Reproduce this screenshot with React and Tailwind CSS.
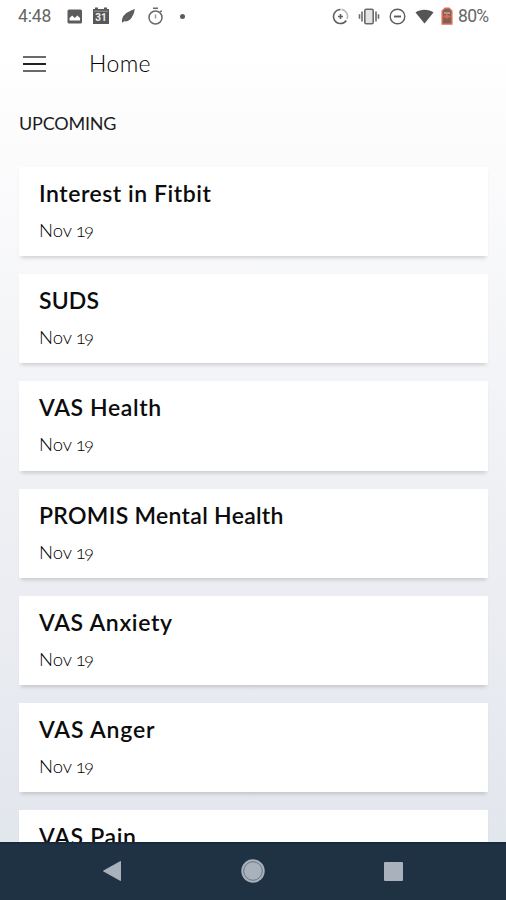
const surveys = [
  { title: "Interest in Fitbit", due: "19", tracking: "tracking-[0.54px]" },
  { title: "SUDS", due: "19", tracking: "tracking-[0.15px]" },
  { title: "VAS Health", due: "19", tracking: "tracking-[0.63px]" },
  { title: "PROMIS Mental Health", due: "19", tracking: "tracking-[0.3px]" },
  { title: "VAS Anxiety", due: "19", tracking: "tracking-[0.66px]" },
  { title: "VAS Anger", due: "19", tracking: "tracking-[0.8px]" },
  { title: "VAS Pain", tracking: "tracking-[0.65px]" },
];

const StatusBar = () => {
  return (
    <div className="flex h-8 shrink-0 items-center justify-between pl-[18px] pr-[15px] font-['Roboto',sans-serif] text-[17.5px] text-[#666]">
      <div className="flex items-center">
        <span className="w-[49px] tracking-[-0.1px]">4:48</span>
        {/* photo */}
        <svg className="h-[15px] w-[16px]" viewBox="0 0 16 15">
          <rect x="0.5" y="0.5" width="14.5" height="14" rx="1.5" fill="#5c5c5c" />
          <path d="M2.5 11.5V9l2.7-2.5L7.7 9l2.7-2.5L13 9v2.5z" fill="#fff" />
        </svg>
        {/* calendar */}
        <svg className="ml-[9px] h-[18px] w-[18px]" viewBox="0 0 18 18">
          <path d="M1 2h2V0.5h3V2h6V0.5h3V2h2v15H1z" fill="#585858" />
          <path d="M2 4.2h14" stroke="#aaa" strokeWidth="0.8" />
          <text x="9" y="14" textAnchor="middle" fontSize="10" fontWeight="700" fill="#eee">31</text>
        </svg>
        {/* feather */}
        <svg className="ml-[11px] h-4 w-[15px]" viewBox="0 0 15 16">
          <path d="M1 14.5C0.5 8 4 4.5 14 1C13 3 13.5 5 12 7C10 12 7 14 3 13.3Z" fill="#5c5c5c" />
          <path d="M1.5 14.5L7 8.5" stroke="#777" strokeWidth="0.7" />
        </svg>
        {/* stopwatch */}
        <svg className="ml-[11px] h-[19px] w-[17px]" viewBox="0 0 17 19" fill="none" stroke="#6a6a6a" strokeWidth="1.5">
          <circle cx="8.5" cy="10.5" r="6.5" />
          <path d="M6 1.3h5M13.3 5l1.4-1.4" />
          <path d="M8.5 7.5v4" stroke="#999" />
        </svg>
        <span className="ml-[16px] h-[5px] w-[5px] rounded-full bg-[#5c5c5c]" />
      </div>
      <div className="flex items-center">
        {/* data saver */}
        <svg className="h-[17px] w-[17px]" viewBox="0 0 17 17" fill="none" stroke="#606060" strokeWidth="1.6">
          <path d="M9.5 1.4A7 7 0 0 1 15 11" stroke="#b8b8b8" />
          <path d="M8.5 1.5A7 7 0 1 0 14.3 12.5" />
          <path d="M8.5 6v5M6 8.5h5" />
        </svg>
        {/* vibrate */}
        <svg className="ml-[9px] h-[17px] w-[22px]" viewBox="0 0 22 17" fill="none" stroke="#6a6a6a" strokeWidth="1.6">
          <rect x="6.8" y="1.3" width="8.4" height="14.4" rx="1.4" fill="#e4e4e4" />
          <path d="M4 3.5v10M18 3.5v10M1.5 6.3v4.4M20.5 6.3v4.4" />
        </svg>
        {/* do not disturb */}
        <svg className="ml-[9px] h-[17px] w-[17px]" viewBox="0 0 17 17" fill="none" stroke="#5c5c5c" strokeWidth="1.4">
          <circle cx="8.5" cy="8.5" r="7.3" />
          <path d="M5 8.5h7" strokeWidth="1.9" />
        </svg>
        <svg className="ml-[9px] h-[15px] w-[19px]" viewBox="0 0 19 15">
          <path d="M0.5 3.5C5 -0.2 14 -0.2 18.5 3.5L9.5 14.5Z" fill="#555" />
        </svg>
        {/* battery */}
        <svg className="ml-[7px] h-[18px] w-[12px]" viewBox="0 0 12 18">
          <path d="M4 1.2h4L10.8 4V17H1.2V4z" fill="#776360" stroke="#e5694a" strokeWidth="1.5" />
          <path d="M3 6h6" stroke="#b5aaa8" strokeWidth="1.6" />
          <path d="M6 6.5v5M2.5 9.5h7" stroke="#e5694a" strokeWidth="1.8" />
        </svg>
        <span className="ml-[5px] w-[33px] whitespace-nowrap tracking-[-0.7px]">80%</span>
      </div>
    </div>
  );
};

const SurveyCard = ({ title, due, tracking }) => {
  return (
    <div className="h-[89.2px] shrink-0 bg-white pl-5 pt-[10px] shadow-[0_4px_4px_-2px_rgba(0,0,0,0.16)]">
      <h2 className={`text-[23px] font-semibold leading-[32px] text-[#0c0c0c] ${tracking}`}>{title}</h2>
      {due && (
        <p className="mt-[7px] text-[18.5px] font-light leading-[28px] text-black [font-variant-numeric:oldstyle-nums]">
          Nov <span className="-ml-px tracking-[-1.6px]">{due}</span>
        </p>
      )}
    </div>
  );
};

const NavBar = () => {
  return (
    <div className="flex h-[58px] shrink-0 items-center justify-between border-t-2 border-[#172a3f] bg-[#1f3244] pb-[2px] pl-[102px] pr-[103px]">
      <svg className="h-[22px] w-5" viewBox="0 0 20 22">
        <path d="M1.5 11L18.5 1.5v19z" fill="#a9b2bc" stroke="#a9b2bc" strokeLinejoin="round" />
      </svg>
      <svg className="h-6 w-6" viewBox="0 0 24 24">
        <circle cx="12" cy="12" r="11.7" fill="#a9b2bc" />
        <circle cx="12" cy="12" r="9.3" fill="none" stroke="#5f6d7a" strokeWidth="0.9" />
      </svg>
      <span className="h-[19px] w-[19px] rounded-[1px] bg-[#a9b2bc]" />
    </div>
  );
};

const App = () => {
  return (
    <div className="flex h-[900px] w-[506px] flex-col overflow-hidden bg-linear-to-b from-white from-5% via-[#eff0f4] via-55% to-[#e2e6ed] to-95% font-['Lato',sans-serif]">
      <StatusBar />
      <header className="flex h-[62px] shrink-0 items-center pl-[23px]">
        <button className="mt-[2px] flex w-[23px] flex-col gap-[5px]" aria-label="Menu">
          <span className="h-[2px] w-full bg-[#6a6a6a]" />
          <span className="h-[2px] w-full bg-[#222]" />
          <span className="h-[2px] w-full bg-[#6a6a6a]" />
        </button>
        <h1 className="ml-[43px] text-[23px] font-light tracking-[0.4px] text-black">Home</h1>
      </header>
      <main className="flex min-h-0 flex-1 flex-col overflow-hidden pl-[19px] pr-[18px]">
        <h3 className="mt-[17px] h-[56px] shrink-0 text-[18px] leading-6 tracking-[-0.2px] text-[#1c1c1c]">UPCOMING</h3>
        <div className="flex flex-col gap-[18px]">
          {surveys.map((survey) => (
            <SurveyCard key={survey.title} {...survey} />
          ))}
        </div>
      </main>
      <NavBar />
    </div>
  );
};

export default App;
